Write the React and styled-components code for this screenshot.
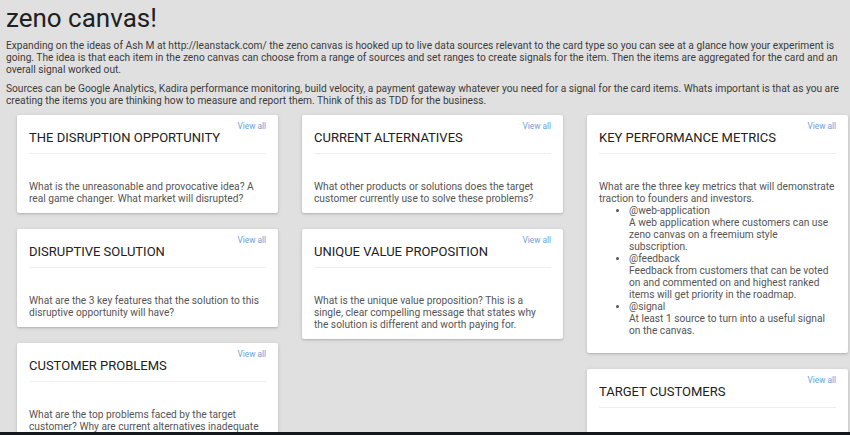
import styled, { createGlobalStyle } from "styled-components";

const GlobalStyle = createGlobalStyle`
  html, body {
    margin: 0;
    padding: 0;
    overflow: hidden;
    background: #e0e0e0;
    font-family: Roboto, "Liberation Sans", sans-serif;
  }
`;

const Page = styled.div`
  padding: 0 4px 0 6px;
  min-height: 435px;
`;

const Heading = styled.h1`
  margin: 0;
  padding-top: 1px;
  font-size: 26px;
  line-height: 35px;
  font-weight: 400;
  color: #212121;
`;

const Intro = styled.p`
  margin: 4px 0 7px;
  font-size: 10.2px;
  line-height: 12px;
  color: #3c3c3c;
`;

const Grid = styled.div`
  display: grid;
  grid-template-columns: repeat(3, 261px);
  column-gap: 24px;
  padding: 1px 0 0 11px;
`;

const Column = styled.div`
  display: flex;
  flex-direction: column;
  gap: 16px;
`;

const Card = styled.div`
  background: #fff;
  border-radius: 2px;
  box-shadow: 0 1px 2px rgba(0, 0, 0, 0.14), 0 1px 4px rgba(0, 0, 0, 0.1);
  padding: 0 12px 8px;
`;

const CardHeader = styled.div`
  display: flex;
  justify-content: space-between;
  align-items: flex-start;
  padding: 15px 0 7px;
  border-bottom: 1px solid #eeeeee;
`;

const CardTitle = styled.h2`
  margin: 0;
  font-size: 13px;
  line-height: 16px;
  font-weight: 400;
  color: #212121;
`;

const ViewAll = styled.a`
  margin-top: -9px;
  font-size: 8.3px;
  line-height: 10px;
  color: #6a9fdc;
  text-decoration: none;
`;

const CardBody = styled.div`
  margin-top: 27px;
  font-size: 10.2px;
  line-height: 12px;
  color: #555;
`;

const List = styled.ul`
  margin: 0 0 8px;
  padding: 0 4px 0 30px;
`;

const Tag = styled.div`
  color: #555;
`;

const Bar = styled.div`
  position: fixed;
  left: 0;
  right: 0;
  bottom: 0;
  height: 3px;
  background: #15181d;
`;

const cards = [
  [
    {
      title: "THE DISRUPTION OPPORTUNITY",
      text: "What is the unreasonable and provocative idea? A real game changer. What market will disrupted?",
    },
    {
      title: "DISRUPTIVE SOLUTION",
      text: "What are the 3 key features that the solution to this disruptive opportunity will have?",
    },
    {
      title: "CUSTOMER PROBLEMS",
      text: "What are the top problems faced by the target customer? Why are current alternatives inadequate to solve them?",
    },
  ],
  [
    {
      title: "CURRENT ALTERNATIVES",
      text: "What other products or solutions does the target customer currently use to solve these problems?",
    },
    {
      title: "UNIQUE VALUE PROPOSITION",
      text: "What is the unique value proposition? This is a single, clear compelling message that states why the solution is different and worth paying for.",
    },
  ],
  [
    {
      title: "KEY PERFORMANCE METRICS",
      text: "What are the three key metrics that will demonstrate traction to founders and investors.",
      items: [
        {
          tag: "@web-application",
          desc: "A web application where customers can use zeno canvas on a freemium style subscription.",
        },
        {
          tag: "@feedback",
          desc: "Feedback from customers that can be voted on and commented on and highest ranked items will get priority in the roadmap.",
        },
        {
          tag: "@signal",
          desc: "At least 1 source to turn into a useful signal on the canvas.",
        },
      ],
    },
    {
      title: "TARGET CUSTOMERS",
      text: "Who are the customers that feel the problems the most?",
    },
  ],
];

export default function App() {
  return (
    <>
      <GlobalStyle />
      <Page>
        <Heading>zeno canvas!</Heading>
        <Intro>
          Expanding on the ideas of Ash M at http://leanstack.com/ the zeno canvas is hooked up to
          live data sources relevant to the card type so you can see at a glance how your experiment
          is going. The idea is that each item in the zeno canvas can choose from a range of sources
          and set ranges to create signals for the item. Then the items are aggregated for the card
          and an overall signal worked out.
        </Intro>
        <Intro>
          Sources can be Google Analytics, Kadira performance monitoring, build velocity, a payment
          gateway whatever you need for a signal for the card items. Whats important is that as you
          are creating the items you are thinking how to measure and report them. Think of this as
          TDD for the business.
        </Intro>
        <Grid>
          {cards.map((col, i) => (
            <Column key={i}>
              {col.map((card) => (
                <Card key={card.title}>
                  <CardHeader>
                    <CardTitle>{card.title}</CardTitle>
                    <ViewAll href="#">View all</ViewAll>
                  </CardHeader>
                  <CardBody>
                    {card.text}
                    {card.items && (
                      <List>
                        {card.items.map((item) => (
                          <li key={item.tag}>
                            <Tag>{item.tag}</Tag>
                            {item.desc}
                          </li>
                        ))}
                      </List>
                    )}
                  </CardBody>
                </Card>
              ))}
            </Column>
          ))}
        </Grid>
      </Page>
      <Bar />
    </>
  );
}
